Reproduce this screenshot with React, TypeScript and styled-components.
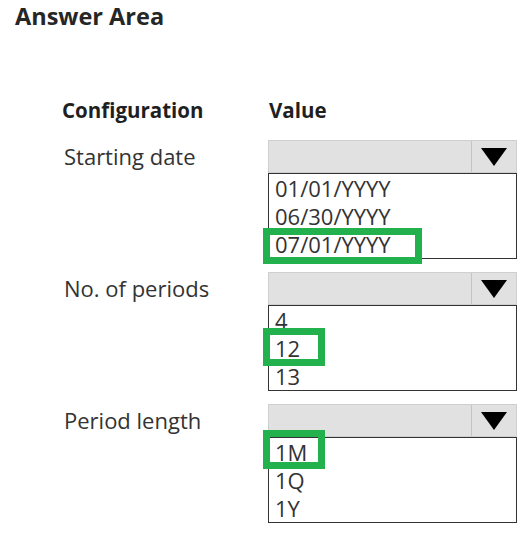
import styled, { createGlobalStyle } from "styled-components";

const GlobalStyle = createGlobalStyle`
  html, body {
    margin: 0;
    padding: 0;
    background: #ffffff;
  }
  body {
    font-family: "Open Sans", "Noto Sans", sans-serif;
    color: #262626;
  }
`;

interface Field {
  label: string;
  options: string[];
  answer: number;
  // green answer frame, relative to the chosen option row
  box: { top: number; width: number; height: number };
}

const fields: Field[] = [
  {
    label: "Starting date",
    options: ["01/01/YYYY", "06/30/YYYY", "07/01/YYYY"],
    answer: 2,
    box: { top: -2, width: 159, height: 36 },
  },
  {
    label: "No. of periods",
    options: ["4", "12", "13"],
    answer: 1,
    box: { top: -6, width: 62, height: 38 },
  },
  {
    label: "Period length",
    options: ["1M", "1Q", "1Y"],
    answer: 0,
    box: { top: -8, width: 62, height: 39 },
  },
];

export default function App() {
  return (
    <>
      <GlobalStyle />
      <Page>
        <Title>Answer Area</Title>
        <Table>
          <HeadCell>Configuration</HeadCell>
          <HeadCell>Value</HeadCell>
          {fields.map((field) => (
            <Row key={field.label}>
              <Label>{field.label}</Label>
              <Dropdown>
                <SelectBar>
                  <SelectValue />
                  <ArrowCell>
                    <svg width="26" height="18" viewBox="0 0 26 18">
                      <polygon points="0,0 26,0 13,18" fill="#000" />
                    </svg>
                  </ArrowCell>
                </SelectBar>
                <OptionList>
                  {field.options.map((opt, i) => (
                    <Option key={opt}>
                      {i === field.answer && (
                        <Highlight
                          style={{
                            top: field.box.top,
                            width: field.box.width,
                            height: field.box.height,
                          }}
                        />
                      )}
                      <OptionText>{opt}</OptionText>
                    </Option>
                  ))}
                </OptionList>
              </Dropdown>
            </Row>
          ))}
        </Table>
      </Page>
    </>
  );
}

const Page = styled.div`
  width: 532px;
  height: 538px;
  padding-left: 15px;
  box-sizing: border-box;
  overflow: hidden;
`;

const Title = styled.h1`
  margin: 0;
  font-size: 23.5px;
  line-height: 32px;
  font-weight: 700;
  color: #262626;
`;

const Table = styled.div`
  display: grid;
  grid-template-columns: 206px 249px;
  margin-top: 66px;
  margin-left: 47px;
  row-gap: 13px;
`;

const HeadCell = styled.div`
  font-size: 20.5px;
  line-height: 24px;
  font-weight: 700;
  color: #1f1f1f;
  margin-bottom: 5px;
  &:nth-child(2) {
    padding-left: 1px;
  }
`;

const Row = styled.div`
  display: contents;
`;

const Label = styled.div`
  font-size: 22px;
  line-height: 33px;
  padding-left: 2px;
  color: #333;
`;

const Dropdown = styled.div`
  display: flex;
  flex-direction: column;
`;

const SelectBar = styled.div`
  display: flex;
  height: 33px;
  background: #e1e1e1;
  border: 1px solid #cfcfcf;
  box-sizing: border-box;
`;

const SelectValue = styled.div`
  flex: 1;
`;

const ArrowCell = styled.div`
  width: 44px;
  border-left: 1px solid #c4c4c4;
  display: flex;
  align-items: center;
  justify-content: center;
`;

const OptionList = styled.div`
  border: 1px solid #333;
  box-sizing: border-box;
`;

const Option = styled.div`
  position: relative;
  height: 28px;
  padding-left: 6px;
`;

const OptionText = styled.span`
  position: relative;
  display: block;
  font-size: 22px;
  line-height: 28px;
  color: #333;
  z-index: 1;
`;

const Highlight = styled.span`
  position: absolute;
  left: -6px;
  border: 7px solid #22b14c;
  box-sizing: border-box;
  z-index: 2;
`;
